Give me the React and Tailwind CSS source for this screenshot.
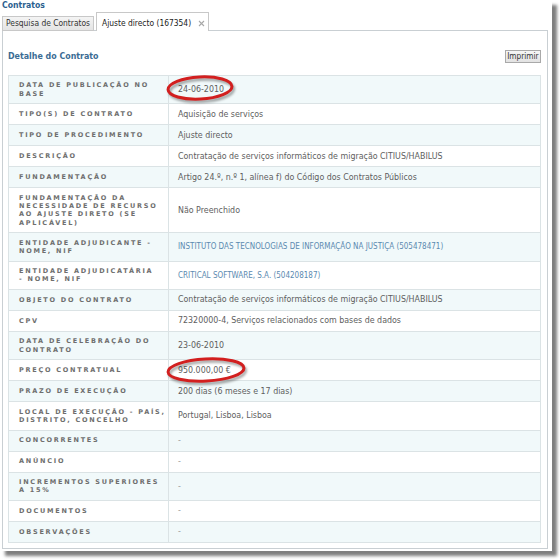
import React from "react";

const rows = [
  { l: ["DATA DE PUBLICAÇÃO NO", "BASE"], v: "24-06-2010" },
  { l: ["TIPO(S) DE CONTRATO"], v: "Aquisição de serviços" },
  { l: ["TIPO DE PROCEDIMENTO"], v: "Ajuste directo" },
  { l: ["DESCRIÇÃO"], v: "Contratação de serviços informáticos de migração CITIUS/HABILUS" },
  { l: ["FUNDAMENTAÇÃO"], v: "Artigo 24.º, n.º 1, alínea f) do Código dos Contratos Públicos" },
  { l: ["FUNDAMENTAÇÃO DA", "NECESSIDADE DE RECURSO", "AO AJUSTE DIRETO (SE", "APLICÁVEL)"], v: "Não Preenchido" },
  { l: ["ENTIDADE ADJUDICANTE -", "NOME, NIF"], v: "INSTITUTO DAS TECNOLOGIAS DE INFORMAÇÃO NA JUSTIÇA (505478471)", link: true },
  { l: ["ENTIDADE ADJUDICATÁRIA", "- NOME, NIF"], v: "CRITICAL SOFTWARE, S.A. (504208187)", link: true },
  { l: ["OBJETO DO CONTRATO"], v: "Contratação de serviços informáticos de migração CITIUS/HABILUS" },
  { l: ["CPV"], v: "72320000-4, Serviços relacionados com bases de dados" },
  { l: ["DATA DE CELEBRAÇÃO DO", "CONTRATO"], v: "23-06-2010" },
  { l: ["PREÇO CONTRATUAL"], v: "950.000,00 €" },
  { l: ["PRAZO DE EXECUÇÃO"], v: "200 dias (6 meses e 17 dias)" },
  { l: ["LOCAL DE EXECUÇÃO - PAÍS,", "DISTRITO, CONCELHO"], v: "Portugal, Lisboa, Lisboa" },
  { l: ["CONCORRENTES"], v: "-", dash: true },
  { l: ["ANÚNCIO"], v: "-", dash: true },
  { l: ["INCREMENTOS SUPERIORES", "A 15%"], v: "-", dash: true },
  { l: ["DOCUMENTOS"], v: "-", dash: true },
  { l: ["OBSERVAÇÕES"], v: "-", dash: true },
];

function Annotations() {
  return (
    <svg className="absolute left-0 top-0 pointer-events-none" width="560" height="560" viewBox="0 0 560 560">
      <defs>
        <filter id="blur" x="-20%" y="-40%" width="140%" height="180%">
          <feGaussianBlur stdDeviation="1.2" />
        </filter>
      </defs>
      <g transform="rotate(-3 200 88)">
        <ellipse cx="201.5" cy="90.5" rx="32" ry="11" fill="none" stroke="rgba(0,0,0,0.35)" strokeWidth="3" filter="url(#blur)" />
        <ellipse cx="200" cy="88" rx="32" ry="11" fill="none" stroke="#d21f1f" strokeWidth="3" />
      </g>
      <g transform="rotate(-3 206 370)">
        <ellipse cx="207.5" cy="372.5" rx="38" ry="11" fill="none" stroke="rgba(0,0,0,0.35)" strokeWidth="3" filter="url(#blur)" />
        <ellipse cx="206" cy="370" rx="38" ry="11" fill="none" stroke="#d21f1f" strokeWidth="3" />
      </g>
    </svg>
  );
}

export default function App() {
  return (
    <div className="w-[560px] h-[560px] bg-white relative font-[DejaVu_Sans_Condensed,DejaVu_Sans,sans-serif]">
      <div className="w-[552px] h-[551px] bg-white shadow-[5px_5px_3px_rgba(0,0,0,0.5)] flex flex-col">
        <div className="h-[12px] pl-[2px] text-[8.6px] leading-[10px] font-bold text-[#2c5f8f]">Contratos</div>
        <div className="h-[19px] -mb-px relative z-10 flex items-end gap-[2px] ml-[2px]">
          <div className="h-[15px] px-[3px] border border-[#c8c8c8] bg-gradient-to-b from-[#f4f4f4] to-[#e4e4e4] text-[8.4px] leading-[13px] text-[#333]">
            Pesquisa de Contratos
          </div>
          <div className="h-[19px] pl-[5px] pr-[3px] border border-b-0 border-[#c8c8c8] bg-white flex items-center gap-[7px] pt-[2px] text-[8.4px] text-[#222]">
            <span>Ajuste directo (167354)</span>
            <svg width="7" height="7" viewBox="0 0 7 7">
              <path d="M1 1L6 6M6 1L1 6" stroke="#a8a8a8" strokeWidth="1.1" />
            </svg>
          </div>
        </div>
        <div className="ml-[2px] w-[546px] h-[519px] border border-[#c9cfd3] pl-[5px] pr-[6px] flex flex-col">
          <div className="pt-[19px] pb-[12px] flex items-center justify-between">
            <div className="text-[8.8px] font-bold text-[#3b6c94] leading-[13px]">Detalhe do Contrato</div>
            <div className="h-[13px] px-[1.5px] border border-[#a9a9a9] bg-gradient-to-b from-[#f6f6f6] to-[#e2e2e2] text-[8.2px] leading-[11px] text-[#333]">
              Imprimir
            </div>
          </div>
          <table className="w-full border-collapse border border-[#dbe3e5]">
            <tbody>
              {rows.map((r, i) => (
                <tr key={i} className={i % 2 === 0 ? "bg-[#f1f9fa]" : "bg-white"}>
                  <td className="w-[160px] border border-[#dbe3e5] pl-[10px] pr-[2px] py-[5.25px] align-middle">
                    <div className="font-[DejaVu_Sans,sans-serif] font-bold text-[6.5px] leading-[8.4px] tracking-[1.75px] text-[#6e6e6e] whitespace-nowrap">
                      {r.l.map((line, j) => (
                        <div key={j}>{line}</div>
                      ))}
                    </div>
                  </td>
                  <td className="border border-[#dbe3e5] pl-[9px] pr-[4px] py-[5.25px] align-middle">
                    {r.link ? (
                      <div className="text-[8px] leading-[9.5px] text-[#5b8ab0] whitespace-nowrap">{r.v}</div>
                    ) : (
                      <div className={"text-[8.8px] leading-[9.5px] whitespace-nowrap " + (r.dash ? "text-[#9a9a9a]" : "text-[#5e5e5e]")}>
                        {r.v}
                      </div>
                    )}
                  </td>
                </tr>
              ))}
            </tbody>
          </table>
        </div>
      </div>
      <Annotations />
    </div>
  );
}
